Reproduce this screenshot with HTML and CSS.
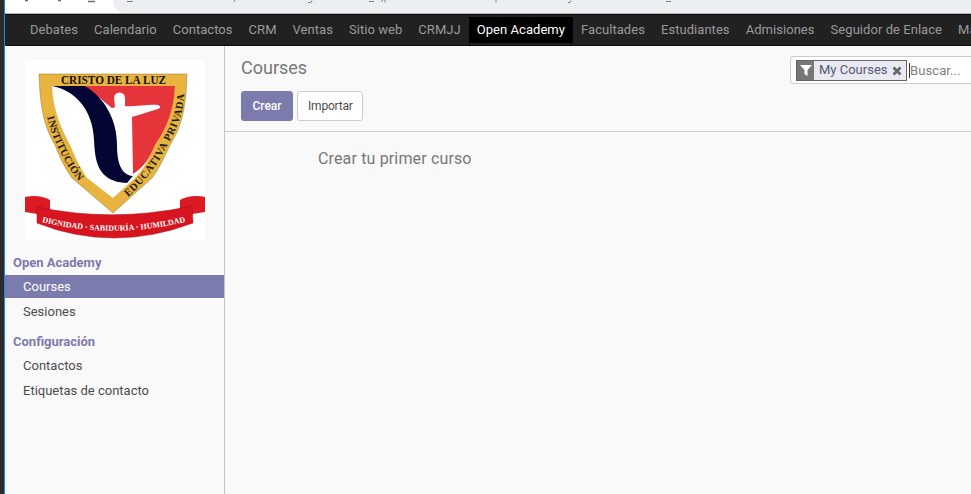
FILE: index.html
```html
<!DOCTYPE html>
<html lang="es">
<head>
<meta charset="utf-8">
<title>Courses</title>
<link rel="stylesheet" href="styles.css">
</head>
<body>
<div class="window">
  <div class="edge"></div>
  <div class="app">
    <div class="chrome">
      <svg class="chrome-art" width="966" height="13" viewBox="0 0 966 13">
        <rect x="108" y="-20" width="900" height="33" rx="12" fill="#eceef1"/>
        <path d="M20 0.500h3M53 0.500h3M83 1.500h7" stroke="#6b6b6b" stroke-width="1.500" fill="none"/>
        <path d="M122 1.500h6M230 0l-1 2M303 2.500h3l1 -2M364 1.500h5M376 2l2 -2M380 0v2.500M491 0v2.500M563 2.500h2l1 -2M661 1.500h5" stroke="#7d8288" stroke-width="1" fill="none"/>
      </svg>
    </div>
    <nav class="navbar">
      <a class="nav-item">Debates</a>
      <a class="nav-item">Calendario</a>
      <a class="nav-item">Contactos</a>
      <a class="nav-item">CRM</a>
      <a class="nav-item">Ventas</a>
      <a class="nav-item">Sitio web</a>
      <a class="nav-item">CRMJJ</a>
      <a class="nav-item nav-active">Open Academy</a>
      <a class="nav-item">Facultades</a>
      <a class="nav-item">Estudiantes</a>
      <a class="nav-item">Admisiones</a>
      <a class="nav-item">Seguidor de Enlace</a>
      <a class="nav-item">Mantenimiento</a>
    </nav>
    <div class="main">
      <aside class="sidebar">
        <div class="logo-box">
          <svg class="logo" width="180" height="180" viewBox="0 0 180 180">
            <defs>
              <path id="arc-left" d="M22,57 C25,68 28,78 33,87 C38,98 44,109 52,119 L62,128"/>
              <path id="arc-right" d="M103,137 C118,124 132,106 142,86 C150,72 157,58 159,38 L160,20"/>
              <path id="arc-ribbon" d="M17,162 Q88,180 164,161"/>
            </defs>
            <path class="shield-gold" d="M14,14 H162 C161,50 156,68 145,85 C138,100 132,112 127,118 L88,153 L47,118 C40,108 35,98 30,85 C20,68 15,50 14,14Z"/>
            <path class="shield-white" d="M27,26 H150 C149,50 142,68 130,85 C125,98 118,110 110,118 L88,138 L62,118 C55,108 50,97 45,85 C36,68 28,50 27,26Z"/>
            <path class="shield-red" d="M60,26 H150 C149,50 142,68 130,85 C125,98 118,108 108,114 L104,62Z"/>
            <path class="shield-white" d="M89,38 a5.500,5.500 0 0 1 11,0 l0,8 c10,1 22,-2 33,-1 c3,1 3,3 0,4 c-9,3 -17,5 -26,8 L108,114 C100,112 96,100 95,85 L90,55 L85,50 C86,48 88,48 90,47Z"/>
            <path class="shield-navy" d="M27,26 C50,30 68,50 69,80 C70,100 72,122 102,123 L108,116 C95,115 92,100 92,85 C92,60 80,38 60,26Z"/>
            <text class="logo-title" x="36" y="24" textLength="105" lengthAdjust="spacingAndGlyphs">CRISTO DE LA LUZ</text>
            <text class="logo-band"><textPath href="#arc-left" textLength="72">INSTITUCIÓN</textPath></text>
            <text class="logo-band"><textPath href="#arc-right" textLength="120">EDUCATIVA PRIVADA</textPath></text>
            <path class="ribbon-tail" d="M0,137 Q14,134 25,140 V156 L0,152Z"/>
            <path class="ribbon-tail" d="M155,140 Q166,134 180,137 V152 L155,156Z"/>
            <path class="ribbon-main" d="M12,147 Q88,163 167,146 L168,163 Q88,193 12,163Z"/>
            <text class="logo-ribbon"><textPath href="#arc-ribbon" textLength="145">DIGNIDAD · SABIDURÍA · HUMILDAD</textPath></text>
          </svg>
        </div>
        <h4 class="menu-title first">Open Academy</h4>
        <a class="menu-item active">Courses</a>
        <a class="menu-item">Sesiones</a>
        <h4 class="menu-title">Configuración</h4>
        <a class="menu-item">Contactos</a>
        <a class="menu-item">Etiquetas de contacto</a>
      </aside>
      <section class="content">
        <header class="panel">
          <div class="panel-left">
            <h2 class="page-title">Courses</h2>
            <div class="buttons">
              <button class="btn btn-primary">Crear</button>
              <button class="btn btn-secondary">Importar</button>
            </div>
          </div>
          <div class="search">
            <div class="facet">
              <span class="facet-icon">
                <svg width="12" height="12" viewBox="0 0 12 12"><path d="M0,1 H12 L7.500,6 V12 L4.500,10 V6Z" fill="#fff"/></svg>
              </span>
              <span class="facet-label">My Courses
                <svg class="facet-x" width="10" height="10" viewBox="0 0 10 10"><path d="M1.500,1.500 L8.500,8.500 M8.500,1.500 L1.500,8.500" stroke="#666" stroke-width="2.800"/></svg>
              </span>
            </div>
            <span class="caret"></span>
            <span class="search-input">Buscar...</span>
          </div>
        </header>
        <p class="empty">Crear tu primer curso</p>
      </section>
    </div>
  </div>
</div>
</body>
</html>
```
FILE: styles.css
```css
* { box-sizing: border-box; }
html, body { margin: 0; height: 100%; overflow: hidden; }
body { font-family: Roboto, "Liberation Sans", sans-serif; font-size: 13px; color: #4c4c4c; background: #f9f9f9; }
.window { display: flex; height: 494px; }
.edge { width: 5px; flex: none; background: #2b2b2b; border-right: 1px solid #1e88e0; }
.app { flex: 1; min-width: 0; display: flex; flex-direction: column; }
.chrome { height: 14px; flex: none; background: #fff; border-bottom: 1px solid #b5b5b5; }
.chrome-art { display: block; }
.navbar { height: 32px; flex: none; display: flex; align-items: center; padding-left: 17px; background: #212121; border-top: 1px solid #0b0b0b; border-bottom: 1px solid #0b0b0b; overflow: hidden; white-space: nowrap; }
.nav-item { flex: none; height: 26px; line-height: 26px; padding: 0 8px; color: #9a9a9a; font-size: 13px; letter-spacing: 0.05px; }
.nav-active { background: #000; color: #fff; }
.main { flex: 1; min-height: 0; display: flex; }
.sidebar { width: 220px; flex: none; background: #f9f9f9; border-right: 1px solid #c4c4c4; padding-top: 14px; }
.logo-box { margin: 0 0 0 20px; width: 180px; height: 180px; background: #fff; }
.logo { display: block; }
.shield-gold { fill: #e8b33f; stroke: #8b7a3a; stroke-width: 0.500; }
.shield-white { fill: #fff; }
.shield-red { fill: #e5353a; }
.shield-navy { fill: #050533; }
.logo-title { font-family: "Liberation Serif", serif; font-weight: 700; font-size: 12px; fill: #111; }
.logo-band { font-family: "Liberation Serif", serif; font-weight: 700; font-size: 10.500px; fill: #1a1a1a; }
.logo-ribbon { font-family: "Liberation Serif", serif; font-weight: 700; font-size: 8px; fill: #fff; }
.ribbon-main { fill: #d8151f; stroke: #a50d18; stroke-width: 0.500; }
.ribbon-tail { fill: #dc1a24; }
.menu-title { margin: 0; padding: 0 0 0 8px; height: 25px; line-height: 25px; font-size: 13px; font-weight: 700; color: #7c7bad; }
.menu-title.first { margin-top: 10px; }
.menu-title:not(.first) { margin-top: 6px; }
.menu-item { display: block; height: 23px; line-height: 23px; margin-bottom: 2px; padding-left: 18px; color: #4c4c4c; font-size: 13px; }
.menu-item.active { background: #7c7bad; color: #fff; }
.content { flex: 1; min-width: 0; background: #f9f9f9; }
.panel { height: 86px; display: flex; justify-content: space-between; align-items: flex-start; padding: 9px 0 0 16px; border-bottom: 1px solid #ccc; }
.page-title { margin: 0; height: 25px; line-height: 25px; font-size: 18px; font-weight: 400; color: #777; }
.buttons { display: flex; gap: 4px; margin-top: 11px; }
.btn { height: 30px; border-radius: 3px; font-family: inherit; font-size: 12px; padding: 0 10px; }
.btn-primary { width: 52px; background: #7c7bad; border: 1px solid #7c7bad; color: #fff; font-weight: 500; }
.btn-secondary { width: 66px; background: #fff; border: 1px solid #ccc; color: #4c4c4c; letter-spacing: -0.2px; }
.search { width: 181px; height: 28px; margin-top: 1px; display: flex; align-items: center; padding-left: 5px; background: #fff; border: 1px solid #ccc; border-right: 0; border-radius: 4px 0 0 4px; }
.facet { height: 21px; width: 111px; flex: none; display: flex; border: 1px solid #666; background: #e9e9f2; }
.facet-icon { width: 17px; flex: none; display: flex; align-items: center; justify-content: center; background: #777; }
.facet-label { display: flex; align-items: center; padding-left: 5px; gap: 4px; font-size: 13px; line-height: 18px; color: #525a72; white-space: nowrap; }
.facet-x { flex: none; margin-top: 2px; }
.caret { width: 1px; height: 15px; margin-left: 2px; background: #333; flex: none; }
.search-input { font-size: 13px; letter-spacing: 0.1px; color: #808080; }
.empty { margin: 18px 0 0 93px; font-size: 16px; line-height: 18px; letter-spacing: 0.15px; color: #777; }
```
